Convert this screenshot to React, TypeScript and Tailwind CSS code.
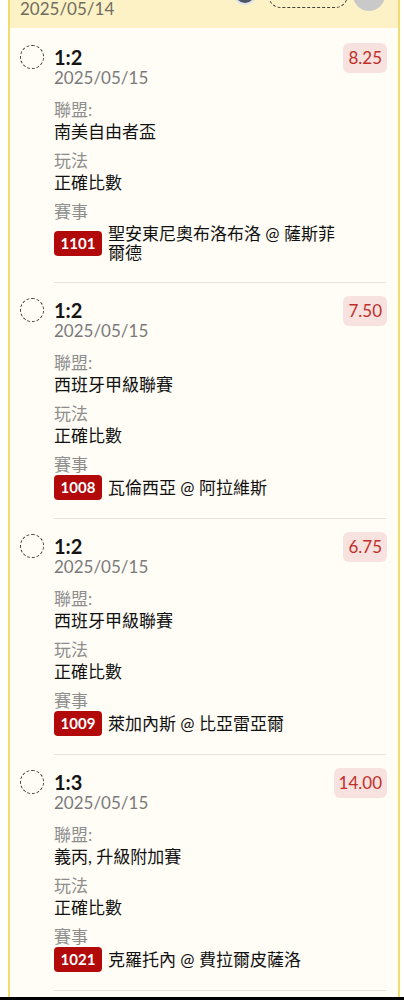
import React from "react";

type Bet = {
  score: string;
  date: string;
  league: string;
  play: string;
  code: string;
  match: string;
  odds: string;
};

const bets: Bet[] = [
  { score: "1:2", date: "2025/05/15", league: "南美自由者盃", play: "正確比數", code: "1101", match: "聖安東尼奧布洛布洛 @ 薩斯菲爾德", odds: "8.25" },
  { score: "1:2", date: "2025/05/15", league: "西班牙甲級聯賽", play: "正確比數", code: "1008", match: "瓦倫西亞 @ 阿拉維斯", odds: "7.50" },
  { score: "1:2", date: "2025/05/15", league: "西班牙甲級聯賽", play: "正確比數", code: "1009", match: "萊加內斯 @ 比亞雷亞爾", odds: "6.75" },
  { score: "1:3", date: "2025/05/15", league: "義丙, 升級附加賽", play: "正確比數", code: "1021", match: "克羅托內 @ 費拉爾皮薩洛", odds: "14.00" },
];

const font = { fontFamily: 'Lato, "Noto Sans CJK TC", "Noto Sans", sans-serif' };

function Card({ bet }: { bet: Bet }) {
  return (
    <div>
      <div className="flex pt-4 pl-[10px] pr-[11px]">
        <div className="w-6 h-[22px] flex items-center">
          <div className="w-6 h-6 shrink-0 rounded-full border-[1.5px] border-dashed border-[#3f3f3f]" />
        </div>
        <div className="flex-1 ml-[10px] pr-2">
          <div className="text-[20px] leading-[22px] font-bold text-[#141414]">{bet.score}</div>
          <div className="text-[17px] leading-[20px] text-[#7a7a7a]">{bet.date}</div>
          <div className="mt-[11px] flex flex-col gap-[7px] text-[17px]">
            <div>
              <div className="leading-[22px] text-[#8e8e8e]">聯盟:</div>
              <div className="leading-[22px] text-[#111111]">{bet.league}</div>
            </div>
            <div>
              <div className="leading-[22px] text-[#8e8e8e]">玩法</div>
              <div className="leading-[22px] text-[#111111]">{bet.play}</div>
            </div>
            <div>
              <div className="leading-[22px] text-[#8e8e8e]">賽事</div>
              <div className="-mt-px flex items-center gap-[6px]">
                <span className="shrink-0 h-[25px] w-12 rounded-[4px] bg-[#b20a0a] text-white text-[15px] font-bold flex items-center justify-center">
                  {bet.code}
                </span>
                <span className="py-[2px] leading-[19px] text-[#111111] max-w-[236px]">{bet.match}</span>
              </div>
            </div>
          </div>
        </div>
        <div className="-mt-[3px] self-start h-[30px] px-[5px] rounded-md bg-[#f8e2df] text-[#c0302a] text-[17px] flex items-center">
          {bet.odds}
        </div>
      </div>
      <div className="mt-[18px] ml-[44px] mr-[12px] h-px bg-[#e6e3dc]" />
    </div>
  );
}

export default function App() {
  return (
    <div className="w-[404px] h-[1000px] overflow-hidden bg-white" style={font}>
      <div className="ml-2 mr-1 border-x-2 border-[#f3dc6e] bg-[#fffdf6]">
        <div className="-mt-[34px] h-[62px] bg-[#fdf2c6] flex justify-between pl-[10px] pr-[13px]">
          <div className="pt-[10px]">
            <div className="text-[17px] leading-[22px] text-[#6f6c5f]">&nbsp;</div>
            <div className="text-[17px] leading-[22px] text-[#6f6c5f]">2025/05/14</div>
          </div>
          <div className="pt-[3px] flex items-start">
            <div className="mt-[14px] w-5 h-5 rounded-full bg-[#4b5563] ring-2 ring-[#dfe3ea]" />
            <div className="mt-[13px] ml-[13px] w-20 h-[26px] rounded-full border-[1.5px] border-dashed border-[#3f3f3f]" />
            <div className="mt-[10px] ml-[5px] w-8 h-8 rounded-full bg-[#c9c9c9]" />
          </div>
        </div>
        <div className="pt-0.5">
          {bets.map((b, i) => (
            <Card key={i} bet={b} />
          ))}
        </div>
        <div className="h-[6px]" />
      </div>
      <div className="h-[20px] bg-black" />
    </div>
  );
}
